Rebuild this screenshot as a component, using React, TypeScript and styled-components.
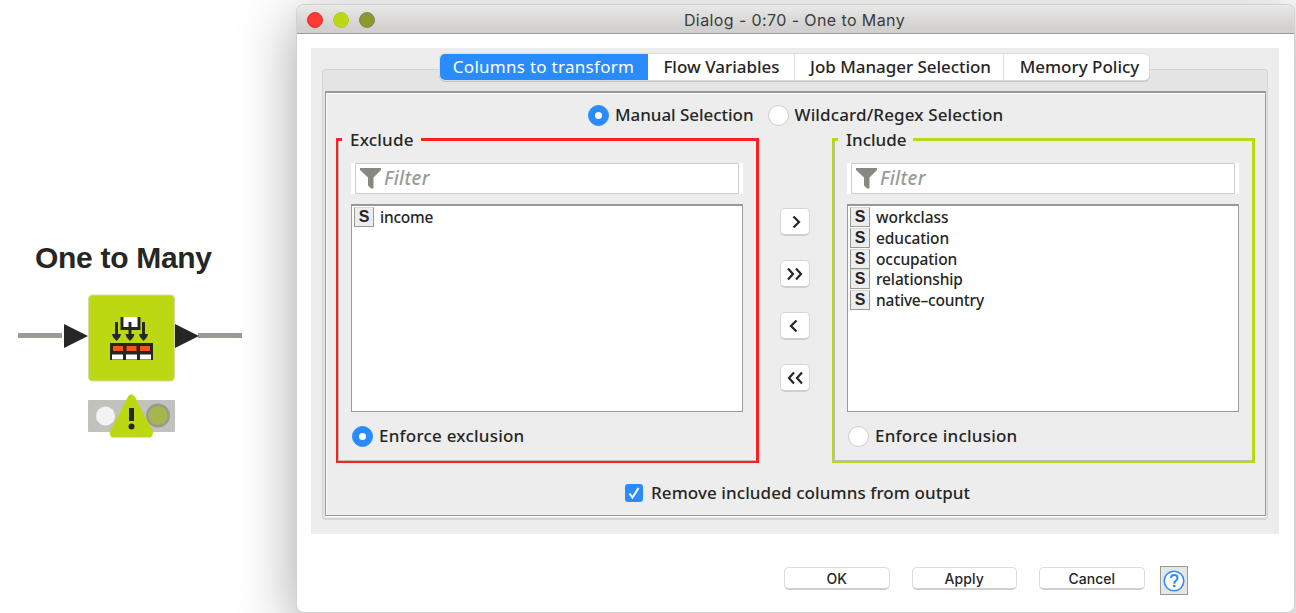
import React from "react";
import styled, { createGlobalStyle } from "styled-components";

const GlobalStyle = createGlobalStyle`
  * { box-sizing: border-box; }
  body { margin: 0; background: #fff; overflow: hidden; }
`;

const ui = `"Noto Sans", "Open Sans", sans-serif`;

const Page = styled.div`
  display: flex;
  width: 1296px;
  height: 613px;
  overflow: hidden;
  color: #262624;
  font-family: ${ui};
`;

const NodeArea = styled.section`
  width: 297px;
  flex: none;
  padding: 240px 0 0 18px;
`;

const NodeTitle = styled.h1`
  margin: 0 0 12px 17px;
  font: bold 30px/36px "Liberation Sans", Arial, sans-serif;
  letter-spacing: -0.3px;
  white-space: nowrap;
`;

const NodeDrawing = styled.svg`
  display: block;
`;

const Window = styled.main`
  display: flex;
  flex-direction: column;
  width: 997px;
  height: 607px;
  margin-top: 5px;
  flex: none;
  background: #fff;
  border-radius: 7px;
  box-shadow: 0 0 0 1px #d2d1d0, 0 14px 56px 3px rgba(0, 0, 0, 0.34);
`;

const TitleBar = styled.header`
  display: grid;
  grid-template-columns: 80px 1fr 80px;
  align-items: center;
  height: 29px;
  flex: none;
  border-bottom: 1px solid #989a94;
  border-radius: 7px 7px 0 0;
  background: linear-gradient(#e9e9e8, #d2d1cf 80%);
`;

const Lights = styled.div`
  display: flex;
  gap: 10px;
  padding: 1px 0 0 10px;
`;

const Light = styled.span<{ $fill: string; $edge: string }>`
  width: 16px;
  height: 16px;
  border-radius: 50%;
  background: ${(p) => p.$fill};
  border: 1px solid ${(p) => p.$edge};
`;

const WindowTitle = styled.div`
  font: 16px/24px Inter, sans-serif;
  text-align: center;
  letter-spacing: 0.4px;
  padding-top: 2px;
  padding-right: 2px;
  color: #3c3d3a;
`;

const Panel = styled.div`
  width: 968px;
  height: 486px;
  margin: 14px 0 0 14px;
  padding: 6px 11px 0;
  background: #ededed;
`;

const Tabs = styled.nav`
  position: relative;
  z-index: 1;
  display: flex;
  width: 709px;
  height: 26px;
  margin-left: 118px;
  border-radius: 5px;
  background: #fff;
  box-shadow: 0 0 0 1px #dadada, 0 1px 0 1px #c4c4c2;
  overflow: hidden;
`;

const Tab = styled.button<{ $width: number; $track: number; $inset?: number; $active?: boolean }>`
  width: ${(p) => p.$width}px;
  flex: none;
  padding: 0 0 0 ${(p) => p.$inset ?? 0}px;
  border: 0;
  border-right: 1px solid ${(p) => (p.$active ? "#2a8cfc" : "#e0e0e0")};
  background: ${(p) => (p.$active ? "#2a8cfc" : "#fff")};
  color: ${(p) => (p.$active ? "#fff" : "#262624")};
  font: ${(p) => (p.$active ? 400 : 500)} 17px/26px ${ui};
  letter-spacing: ${(p) => p.$track}px;
  white-space: nowrap;
  &:last-child { border-right: 0; }
`;

const TabPane = styled.div`
  height: 451px;
  margin-top: -11px;
  padding: 21px 1px 0 2px;
  border: 1px solid #d4d4d3;
  border-width: 1px 1px 2px;
  border-radius: 4px;
  background: #e4e4e4;
`;

const Content = styled.div`
  display: flex;
  flex-direction: column;
  height: 425px;
  border: 2px solid #989a94;
  border-width: 2px 1px 1px;
  box-shadow: inset 1px 1px #fff, 0 1px #fff, 0 2px #ededed;
  background: #ededed;
`;

const ModeRow = styled.div`
  display: flex;
  align-items: center;
  height: 24px;
  margin: 10px 0 0 262px;
  gap: 14px;
`;

const Choice = styled.label<{ $track?: number; $gap?: number; $indent?: number }>`
  display: flex;
  align-items: center;
  gap: ${(p) => p.$gap ?? 6}px;
  padding-left: ${(p) => p.$indent ?? 0}px;
  font: 500 17px/24px ${ui};
  letter-spacing: ${(p) => p.$track ?? 0}px;
  white-space: nowrap;
`;

const Radio = styled.span<{ $on?: boolean }>`
  display: grid;
  place-items: center;
  width: 21px;
  height: 21px;
  border-radius: 50%;
  border: 1px solid ${(p) => (p.$on ? "#2a8cfc" : "#cdcdcc")};
  background: ${(p) => (p.$on ? "#2a8cfc" : "#fff")};
  &::after {
    content: "";
    width: 7px;
    height: 7px;
    border-radius: 50%;
    background: #fff;
  }
`;

const Columns = styled.div`
  display: grid;
  grid-template-columns: 423px 73px 423px;
  height: 325px;
  margin: 11px 0 0 10px;
`;

const Group = styled.section<{ $color: string }>`
  position: relative;
  border: 3px solid ${(p) => p.$color};
  border-width: 3px 3px 2px 2px;
  padding: 22px 13px 0;
  box-shadow: inset 1px -1px #bcbcba;
`;

const Legend = styled.h2<{ $width: number; $track: number }>`
  position: absolute;
  top: -13px;
  left: 4px;
  width: ${(p) => p.$width}px;
  margin: 0;
  padding-left: 8px;
  background: #ededed;
  font: 500 17px/24px ${ui};
  letter-spacing: ${(p) => p.$track}px;
`;

const FilterWrap = styled.div`
  height: 31px;
  padding: 0 4px;
  background: #fff;
`;

const FilterBox = styled.div`
  display: flex;
  align-items: center;
  gap: 3px;
  height: 31px;
  padding: 0 0 1px 4px;
  border: 1px solid #cfcfce;
  color: #989c94;
  font: italic 500 19px/26px ${ui};
  letter-spacing: 0.3px;
`;

const List = styled.ul`
  height: 208px;
  margin: 10px 0 12px;
  padding: 1px 0 0 2px;
  list-style: none;
  border: 1px solid #989a94;
  border-top-width: 2px;
  background: #fff;
`;

const ListItem = styled.li<{ $track: number }>`
  display: flex;
  align-items: center;
  gap: 6px;
  height: 20.7px;
  font: 500 15.5px/20px ${ui};
  letter-spacing: ${(p) => p.$track}px;
`;

const TypeBadge = styled.span`
  width: 20px;
  height: 20px;
  border: 1px solid #989a94;
  border-top-color: #d8d8d7;
  background: #ededed;
  font: bold 16px/18px "Liberation Sans", Arial, sans-serif;
  letter-spacing: 0;
  text-align: center;
`;

const Mover = styled.div`
  display: flex;
  flex-direction: column;
  align-items: center;
  gap: 24px;
  padding: 70px 1px 0 0;
`;

const MoveButton = styled.button`
  display: grid;
  place-items: center;
  width: 30px;
  height: 28px;
  padding: 0;
  border: 1px solid #d6d6d6;
  border-bottom: 2px solid #cfcfce;
  border-radius: 5px;
  background: #fff;
`;

const OutputRow = styled.div`
  display: flex;
  align-items: center;
  height: 24px;
  margin: 18px 0 0 299px;
`;

const CheckBox = styled.span`
  display: grid;
  place-items: center;
  width: 18px;
  height: 18px;
  border-radius: 3px;
  background: #2a8cfc;
`;

const Footer = styled.footer`
  display: flex;
  gap: 22px;
  margin: 32px 0 0 487px;
`;

const ActionButton = styled.button<{ $track: number }>`
  width: 105.5px;
  height: 23px;
  margin-top: 1px;
  padding: 1px 0 0;
  border: 1px solid #dcdcdb;
  border-bottom: 2px solid #cfcfce;
  border-radius: 5px;
  background: #fff;
  color: #262624;
  font: 500 14px/19px Inter, sans-serif;
  letter-spacing: ${(p) => p.$track}px;
`;

const HelpButton = styled.button`
  display: grid;
  place-items: center;
  width: 28px;
  height: 29px;
  margin-left: -7px;
  padding: 0;
  border: 1px solid #989a94;
  background: #e6e6e6;
`;

const FunnelIcon = () => (
  <svg width="21" height="22" viewBox="0 0 21 22">
    <path d="M0 1h21v2l-7.500 7.500v11h-2.500l-3-3v-8L0 3z" fill="#858a81" />
  </svg>
);

const Chevrons = ({ left = false, double = false }: { left?: boolean; double?: boolean }) => (
  <svg width="18" height="14" viewBox="0 0 18 14" fill="none" stroke="#262624" strokeWidth="2.200">
    <g transform={left ? "translate(18 0) scale(-1 1)" : undefined}>
      {double ? (
        <path d="M2 1.500l5 5.500l-5 5.500M10 1.500l5 5.500l-5 5.500" />
      ) : (
        <path d="M7.500 1.500l5.500 5.500l-5.500 5.500" />
      )}
    </g>
  </svg>
);

const Node = () => (
  <NodeDrawing width="226" height="152" viewBox="18 288 226 152">
    <path d="M18 335.500h44M198 335.500h44" stroke="#989c94" strokeWidth="5" />
    <rect x="88.500" y="295" width="86" height="86" rx="4" fill="#bcd812" stroke="#d5dba5" strokeWidth="1" />
    <path d="M64 324l24 12l-24 12zM175 324l24 12l-24 12z" fill="#262624" />
    <path d="M123 317h15v10h-15z" fill="#fff" />
    <path d="M122 317v11.500h17v-11.500M116.500 322v14M130 322v14M143.500 322v14" fill="none" stroke="#262624" strokeWidth="2.900" />
    <path d="M112 334h9l-1 3l-3.500 4l-3.500-4zM125.500 334h9l-1 3l-3.500 4l-3.500-4zM139 334h9l-1 3l-3.500 4l-3.500-4z" fill="#262624" />
    <path d="M110 343h43v17h-43z" fill="#262624" />
    <path d="M113 346h10v5h-10zM126.500 346h10v5h-10zM140 346h10v5h-10z" fill="#f4571c" />
    <path d="M112 354.500h11v5h-11zM126 354.500h11v5h-11zM140 354.500h11v5h-11z" fill="#fff" />
    <rect x="88" y="400" width="87" height="32" rx="1" fill="#c1c2be" />
    <circle cx="105.500" cy="416" r="9.500" fill="#f3f3f3" />
    <circle cx="158" cy="415.500" r="12" fill="#969c8c" />
    <circle cx="158" cy="415.500" r="9.500" fill="#a8b54c" />
    <path d="M128 396.500q3-4.500 6.500 0q2 2 2.500 5l15 28q2 4-1 8h-39q-4-4-1-8l14-27z" fill="#bcd812" />
    <path d="M129 408h5v13h-5z" fill="#262624" />
    <circle cx="131.500" cy="426.500" r="3" fill="#262624" />
  </NodeDrawing>
);

const FilterField = () => (
  <FilterWrap>
    <FilterBox>
      <FunnelIcon />
      <span>Filter</span>
    </FilterBox>
  </FilterWrap>
);

interface Item {
  name: string;
  track: number;
}

const ItemList = ({ items }: { items: Item[] }) => (
  <List>
    {items.map((item) => (
      <ListItem key={item.name} $track={item.track}>
        <TypeBadge>S</TypeBadge>
        <span>{item.name}</span>
      </ListItem>
    ))}
  </List>
);

const excluded: Item[] = [{ name: "income", track: -0.25 }];
const included: Item[] = [
  { name: "workclass", track: -0.05 },
  { name: "education", track: -0.1 },
  { name: "occupation", track: -0.1 },
  { name: "relationship", track: -0.15 },
  { name: "native–country", track: -0.2 },
];

export default function App() {
  return (
    <>
      <GlobalStyle />
      <Page>
        <NodeArea>
          <NodeTitle>One to Many</NodeTitle>
          <Node />
        </NodeArea>
        <Window>
          <TitleBar>
            <Lights>
              <Light $fill="#fb3a36" $edge="#e0302c" />
              <Light $fill="#bcd812" $edge="#b6ce20" />
              <Light $fill="#8b9a28" $edge="#80866c" />
            </Lights>
            <WindowTitle>Dialog - 0:70 - One to Many</WindowTitle>
          </TitleBar>
          <Panel>
            <Tabs>
              <Tab $width={208} $track={0.28} $active>Columns to transform</Tab>
              <Tab $width={147} $track={0} $inset={1}>Flow Variables</Tab>
              <Tab $width={209} $track={-0.05} $inset={3}>Job Manager Selection</Tab>
              <Tab $width={145} $track={0} $inset={6}>Memory Policy</Tab>
            </Tabs>
            <TabPane>
              <Content>
                <ModeRow>
                  <Choice $track={-0.05}><Radio $on />Manual Selection</Choice>
                  <Choice $track={0.12}><Radio />Wildcard/Regex Selection</Choice>
                </ModeRow>
                <Columns>
                  <Group $color="#fc2020">
                    <Legend $width={79} $track={0.2}>Exclude</Legend>
                    <FilterField />
                    <ItemList items={excluded} />
                    <Choice $track={0.22} $indent={1}><Radio $on />Enforce exclusion</Choice>
                  </Group>
                  <Mover>
                    <MoveButton><Chevrons /></MoveButton>
                    <MoveButton><Chevrons double /></MoveButton>
                    <MoveButton><Chevrons left /></MoveButton>
                    <MoveButton><Chevrons left double /></MoveButton>
                  </Mover>
                  <Group $color="#bcd812">
                    <Legend $width={75} $track={0}>Include</Legend>
                    <FilterField />
                    <ItemList items={included} />
                    <Choice $track={0.22} $indent={1}><Radio />Enforce inclusion</Choice>
                  </Group>
                </Columns>
                <OutputRow>
                  <Choice $gap={8} $track={0.08}>
                    <CheckBox>
                      <svg width="14" height="14" viewBox="0 0 14 14" fill="none" stroke="#fff" strokeWidth="2">
                        <path d="M2.500 7.500l3 4l6-9.500" />
                      </svg>
                    </CheckBox>
                    Remove included columns from output
                  </Choice>
                </OutputRow>
              </Content>
            </TabPane>
          </Panel>
          <Footer>
            <ActionButton $track={0}>OK</ActionButton>
            <ActionButton $track={0.1}>Apply</ActionButton>
            <ActionButton $track={0}>Cancel</ActionButton>
            <HelpButton>
              <svg width="24" height="24" viewBox="0 0 24 24" fill="none" stroke="#2a8cfc">
                <circle cx="12" cy="12" r="9.800" fill="#fff" strokeWidth="1.500" />
                <path d="M9 9q0-3 3.200-3q3.300 0 3.300 3q0 1.500-1.800 2.800q-1.500 1-1.500 3" strokeWidth="2" />
                <path d="M11 17h2.500" strokeWidth="2.200" />
              </svg>
            </HelpButton>
          </Footer>
        </Window>
      </Page>
    </>
  );
}
